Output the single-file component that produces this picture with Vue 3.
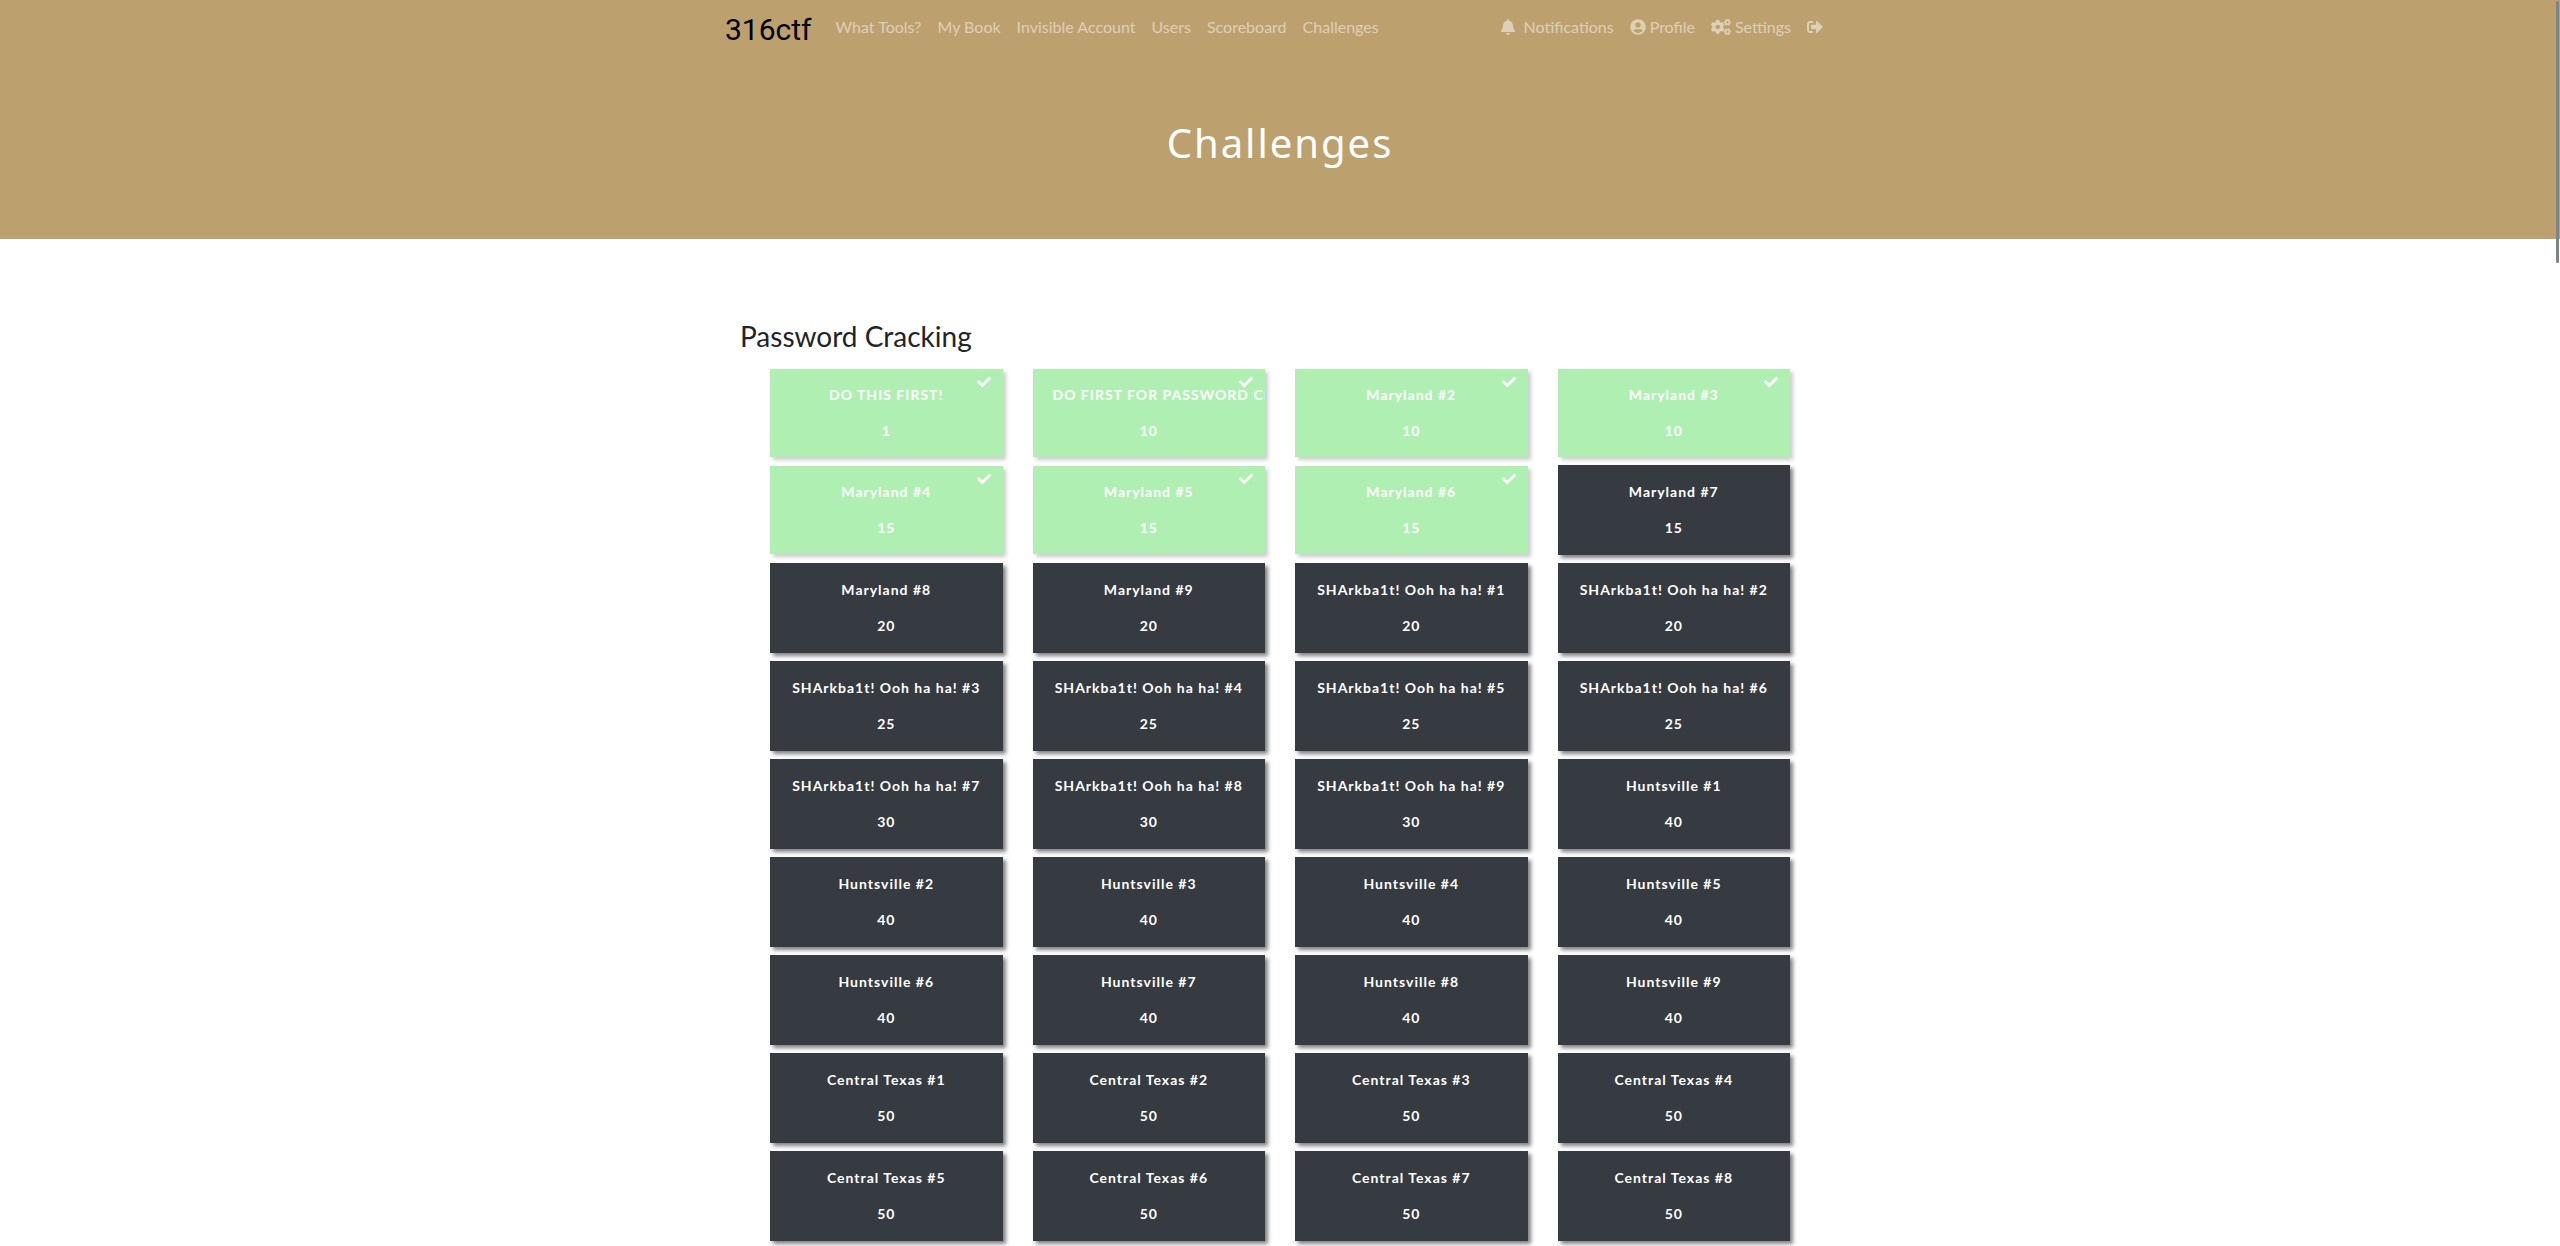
<script setup>
const pages = ['What Tools?', 'My Book', 'Invisible Account', 'Users', 'Scoreboard', 'Challenges']

const challenges = [
  { name: 'DO THIS FIRST!', value: 1, solved: true },
  { name: 'DO FIRST FOR PASSWORD CRACKING', value: 10, solved: true },
  { name: 'Maryland #2', value: 10, solved: true },
  { name: 'Maryland #3', value: 10, solved: true },
  { name: 'Maryland #4', value: 15, solved: true },
  { name: 'Maryland #5', value: 15, solved: true },
  { name: 'Maryland #6', value: 15, solved: true },
  { name: 'Maryland #7', value: 15 },
  { name: 'Maryland #8', value: 20 },
  { name: 'Maryland #9', value: 20 },
  { name: 'SHArkba1t! Ooh ha ha! #1', value: 20 },
  { name: 'SHArkba1t! Ooh ha ha! #2', value: 20 },
  { name: 'SHArkba1t! Ooh ha ha! #3', value: 25 },
  { name: 'SHArkba1t! Ooh ha ha! #4', value: 25 },
  { name: 'SHArkba1t! Ooh ha ha! #5', value: 25 },
  { name: 'SHArkba1t! Ooh ha ha! #6', value: 25 },
  { name: 'SHArkba1t! Ooh ha ha! #7', value: 30 },
  { name: 'SHArkba1t! Ooh ha ha! #8', value: 30 },
  { name: 'SHArkba1t! Ooh ha ha! #9', value: 30 },
  ...Array.from({ length: 9 }, (_, i) => ({ name: `Huntsville #${i + 1}`, value: 40 })),
  ...Array.from({ length: 8 }, (_, i) => ({ name: `Central Texas #${i + 1}`, value: 50 })),
]
</script>

<template>
  <div class="page">
    <header class="banner">
      <nav class="navbar">
        <a href="#" class="brand">316ctf</a>
        <ul class="links">
          <li v-for="page in pages" :key="page"><a href="#" class="link">{{ page }}</a></li>
        </ul>
        <ul class="links account">
          <li>
            <a href="#" class="link">
              <svg class="icon bell" viewBox="0 0 448 512" width="14" height="16" aria-hidden="true"><path d="M224 512c35.32 0 63.97-28.65 63.97-64H160.03c0 35.35 28.65 64 63.97 64zm215.39-149.71c-19.32-20.76-55.47-51.99-55.47-154.29 0-77.7-54.48-139.9-127.94-155.16V32c0-17.67-14.32-32-31.98-32s-31.98 14.33-31.98 32v20.84C118.56 68.1 64.08 130.3 64.08 208c0 102.3-36.15 133.53-55.47 154.29-6 6.45-8.66 14.16-8.61 21.71.11 16.4 12.98 32 32.1 32h383.8c19.12 0 32-15.6 32.1-32 .05-7.55-2.61-15.27-8.61-21.71z" /></svg>
              <span>Notifications</span>
            </a>
          </li>
          <li>
            <a href="#" class="link">
              <svg class="icon" viewBox="0 0 496 512" width="16" height="16" aria-hidden="true"><path d="M248 8C111 8 0 119 0 256s111 248 248 248 248-111 248-248S385 8 248 8zm0 96c48.6 0 88 39.4 88 88s-39.4 88-88 88-88-39.4-88-88 39.4-88 88-88zm0 344c-58.7 0-111.3-26.6-146.5-68.2 18.8-35.4 55.6-59.8 98.5-59.8 2.4 0 4.8.4 7.1 1.1 13 4.2 26.6 6.9 40.9 6.9 14.3 0 28-2.7 40.9-6.9 2.3-.7 4.7-1.1 7.1-1.1 42.9 0 79.7 24.4 98.5 59.8C359.3 421.4 306.7 448 248 448z" /></svg>
              <span>Profile</span>
            </a>
          </li>
          <li>
            <a href="#" class="link">
              <svg class="icon" viewBox="0 0 640 512" width="20" height="16" aria-hidden="true">
                <path id="small-cog" d="M512.1 191l-8.2 14.3c-3 5.3-9.4 7.5-15.1 5.4-11.8-4.4-22.6-10.7-32.1-18.6-4.6-3.8-5.8-10.5-2.8-15.7l8.2-14.3c-6.9-8-12.3-17.3-15.9-27.4h-16.5c-6 0-11.2-4.3-12.2-10.3-2-12-2.1-24.6 0-37.1 1-6 6.2-10.4 12.2-10.4h16.5c3.6-10.1 9-19.4 15.9-27.4l-8.2-14.3c-3-5.2-1.9-11.9 2.8-15.7 9.5-7.9 20.4-14.2 32.1-18.6 5.7-2.1 12.1.1 15.1 5.4l8.2 14.3c10.5-1.9 21.2-1.9 31.7 0L552 6.3c3-5.3 9.4-7.5 15.1-5.4 11.8 4.4 22.6 10.7 32.1 18.6 4.6 3.8 5.8 10.5 2.8 15.7l-8.2 14.3c6.9 8 12.3 17.3 15.9 27.4h16.5c6 0 11.2 4.3 12.2 10.3 2 12 2.1 24.6 0 37.1-1 6-6.2 10.4-12.2 10.4h-16.5c-3.6 10.1-9 19.4-15.9 27.4l8.2 14.3c3 5.2 1.9 11.9-2.8 15.7-9.5 7.9-20.4 14.2-32.1 18.6-5.7 2.1-12.1-.1-15.1-5.4l-8.2-14.3c-10.4 1.9-21.2 1.9-31.7 0zm-10.5-58.8c38.5 29.6 82.4-14.3 52.8-52.8-38.5-29.7-82.4 14.3-52.8 52.8z" />
                <use href="#small-cog" y="300" />
                <path d="M386.3 286.1l33.7 16.8c10.1 5.8 14.5 18.1 10.5 29.1-8.9 24.2-26.4 46.4-42.6 65.8-7.4 8.9-20.2 11.1-30.3 5.3l-29.1-16.8c-16 13.7-34.6 24.6-54.9 31.7v33.6c0 11.6-8.3 21.6-19.7 23.6-24.6 4.2-50.4 4.4-75.9 0-11.5-2-20-11.9-20-23.6V418c-20.3-7.2-38.9-18-54.9-31.7L74 403c-10 5.8-22.9 3.6-30.3-5.3-16.2-19.4-33.3-41.6-42.2-65.7-4-10.9.4-23.2 10.5-29.1l33.3-16.8c-3.9-20.9-3.9-42.4 0-63.4L12 205.8c-10.1-5.8-14.6-18.1-10.5-29 8.9-24.2 26-46.4 42.2-65.8 7.4-8.9 20.2-11.1 30.3-5.3l29.1 16.8c16-13.7 34.6-24.6 54.9-31.7V57.1c0-11.5 8.2-21.5 19.6-23.5 24.6-4.2 50.5-4.4 76-.1 11.5 2 20 11.9 20 23.6v33.6c20.3 7.2 38.9 18 54.9 31.7l29.1-16.8c10-5.8 22.9-3.6 30.3 5.3 16.2 19.4 33.2 41.6 42.1 65.8 4 10.9.1 23.2-10 29.1l-33.7 16.8c3.9 21 3.9 42.5 0 63.5zm-117.6 21.1c59.2-77-28.7-164.9-105.7-105.7-59.2 77 28.7 164.9 105.7 105.7z" />
              </svg>
              <span>Settings</span>
            </a>
          </li>
          <li>
            <a href="#" class="link" aria-label="Logout">
              <svg class="icon" viewBox="0 0 512 512" width="16" height="16" aria-hidden="true"><path d="M497 273L329 441c-15 15-41 4.500-41-17v-96H152c-13.300 0-24-10.700-24-24v-96c0-13.300 10.700-24 24-24h136V88c0-21.400 25.900-32 41-17l168 168c9.300 9.400 9.300 24.600 0 34zM192 436v-40c0-6.600-5.400-12-12-12H96c-17.700 0-32-14.300-32-32V160c0-17.700 14.300-32 32-32h84c6.600 0 12-5.400 12-12V76c0-6.600-5.400-12-12-12H96c-53 0-96 43-96 96v192c0 53 43 96 96 96h84c6.600 0 12-5.400 12-12z" /></svg>
            </a>
          </li>
        </ul>
      </nav>
      <h1 class="title">Challenges</h1>
    </header>

    <main class="board">
      <h3 class="category">Password Cracking</h3>
      <div class="tiles">
        <button
          v-for="item in challenges"
          :key="item.name"
          type="button"
          class="tile"
          :class="{ solved: item.solved }"
        >
          <svg v-if="item.solved" class="check" viewBox="0 0 512 512" width="14" height="14" aria-hidden="true"><path d="M173.898 439.404l-166.400-166.400c-9.997-9.997-9.997-26.206 0-36.204l36.203-36.204c9.997-9.998 26.207-9.998 36.204 0L192 312.690 432.095 72.596c9.997-9.997 26.207-9.997 36.204 0l36.203 36.204c9.997 9.997 9.997 26.206 0 36.204l-294.400 294.401c-9.998 9.997-26.207 9.997-36.204-.001z" /></svg>
          <span class="name">{{ item.name }}</span>
          <span class="value">{{ item.value }}</span>
        </button>
      </div>
    </main>
    <div class="scroll-thumb"></div>
  </div>
</template>

<style>
body {
  margin: 0;
  background: #fff;
}
</style>

<style scoped>
.page {
  font-family: Lato, "Liberation Sans", sans-serif;
  font-size: 16px;
  line-height: 24px;
  color: #212529;
}

.banner {
  background: #bca16f;
  padding-bottom: 72px;
}

.navbar {
  display: flex;
  align-items: center;
  box-sizing: border-box;
  max-width: 1140px;
  height: 54px;
  margin: 0 auto;
  padding: 0 15px;
}

.brand {
  margin-right: 16px;
  padding-top: 6px;
  font-family: Roboto, sans-serif;
  font-size: 30px;
  line-height: 40px;
  color: #000;
  text-decoration: none;
}

.links {
  display: flex;
  margin: 0;
  padding: 0;
  list-style: none;
}

.account {
  margin-left: auto;
}

.link {
  display: flex;
  align-items: center;
  padding: 8px;
  min-height: 24px;
  color: rgba(255, 255, 255, 0.5);
  text-decoration: none;
  white-space: nowrap;
}

.icon {
  margin-right: 4px;
  fill: currentColor;
}

.bell {
  margin-right: 8px;
}

.title {
  margin: 65px 0 0;
  font-family: "Noto Sans", sans-serif;
  font-size: 40px;
  font-weight: 400;
  line-height: 48px;
  letter-spacing: 2px;
  text-align: center;
  color: #fff;
}

.board {
  box-sizing: border-box;
  max-width: 1140px;
  margin: 0 auto;
  padding: 80px 30px 0;
}

.category {
  margin: 0 0 16px;
  font-size: 28px;
  font-weight: 400;
  line-height: 34px;
}

.tiles {
  display: grid;
  grid-template-columns: repeat(4, minmax(0, 1fr));
  align-items: center;
  gap: 8px 30px;
  padding: 0 30px 5px;
}

.tile {
  position: relative;
  display: flex;
  flex-direction: column;
  gap: 16px;
  padding: 16px 20px;
  overflow: hidden;
  border: 0 solid #363a41;
  border-width: 1px 0;
  background: #363a41;
  box-shadow: 3px 3px 4px gray;
  font: 700 14px/20px Lato, "Liberation Sans", sans-serif;
  letter-spacing: 1px;
  color: #fff;
  text-align: center;
  white-space: nowrap;
}

.solved {
  border-width: 0;
  background: #aff0b2;
  box-shadow: 3px 3px 4px #ccc;
}

.name,
.value {
  width: 100%;
}

.check {
  position: absolute;
  top: 6px;
  right: 12px;
  fill: #fff;
}

.scroll-thumb {
  position: fixed;
  top: 1px;
  right: 1px;
  width: 3px;
  height: 21vh;
  border-radius: 2px;
  background: #7f8583;
}
</style>
